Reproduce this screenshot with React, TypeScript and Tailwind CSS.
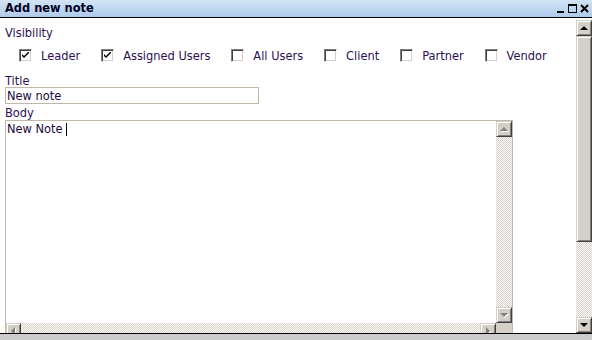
import React from "react";

const FONT = "font-['DejaVu_Sans_Condensed','DejaVu_Sans',sans-serif]";

function Arrow({ dir, disabled }: { dir: "up" | "down" | "left" | "right"; disabled?: boolean }) {
  const pts: Record<string, string> = {
    up: "4,1 0,5 8,5",
    down: "0,1 8,1 4,5",
    left: "5,0 5,8 1,4",
    right: "1,0 1,8 5,4",
  };
  const vertical = dir === "up" || dir === "down";
  const w = vertical ? 9 : 7;
  const h = vertical ? 7 : 9;
  return (
    <svg width={w} height={h} viewBox={`0 0 ${w} ${h}`}>
      {disabled && <polygon points={pts[dir]} fill="#ffffff" transform="translate(1,1)" />}
      <polygon points={pts[dir]} fill={disabled ? "#808080" : "#000000"} />
    </svg>
  );
}

function SButton({ dir, disabled, className = "" }: { dir: "up" | "down" | "left" | "right"; disabled?: boolean; className?: string }) {
  return (
    <div
      className={`flex items-center justify-center bg-[#d4d0c8] border border-t-[#d4d0c8] border-l-[#d4d0c8] border-r-[#404040] border-b-[#404040] shadow-[inset_1px_1px_#ffffff,inset_-1px_-1px_#808080] ${className}`}
    >
      <Arrow dir={dir} disabled={disabled} />
    </div>
  );
}

function Checkbox({ checked }: { checked?: boolean }) {
  return (
    <div className="w-[13px] h-[13px] shrink-0 bg-white border border-t-[#808080] border-l-[#808080] border-r-white border-b-white shadow-[inset_1px_1px_#404040,inset_-1px_-1px_#d4d0c8] flex items-center justify-center">
      {checked && (
        <svg width="7" height="7" viewBox="0 0 7 7">
          <path d="M0 2 L0 4 L2 6 L7 1 L7 -1 L2 4 Z" fill="#000" />
        </svg>
      )}
    </div>
  );
}

const checker =
  "bg-[image:repeating-conic-gradient(#d4d0c8_0_25%,#ffffff_0_50%)] bg-[length:2px_2px]";

export default function App() {
  const options = [
    { label: "Leader", checked: true },
    { label: "Assigned Users", checked: true },
    { label: "All Users" },
    { label: "Client" },
    { label: "Partner" },
    { label: "Vendor" },
  ];

  return (
    <div className={`w-[592px] h-[340px] flex flex-col overflow-hidden bg-white text-[12.7px] ${FONT}`}>
      {/* title bar */}
      <div className="h-[18px] shrink-0 flex items-center justify-between border-b border-black bg-gradient-to-b from-[#d2e4f5] to-[#aecbea] pl-[5px] pr-[2px]">
        <span className="font-bold text-[#000022] leading-none">Add new note</span>
        <div className="flex items-center gap-[1px]">
          <svg width="11" height="11" viewBox="0 0 11 11">
            <rect x="2" y="8" width="7" height="2" fill="#000" />
          </svg>
          <svg width="11" height="11" viewBox="0 0 11 11">
            <rect x="1.5" y="1.5" width="8" height="8" fill="none" stroke="#000" strokeWidth="1" />
            <rect x="1" y="1" width="9" height="2" fill="#000" />
          </svg>
          <svg width="11" height="11" viewBox="0 0 11 11">
            <path d="M2 2 L9 9 M9 2 L2 9" stroke="#000" strokeWidth="2" />
          </svg>
        </div>
      </div>

      {/* body */}
      <div className="flex-1 flex min-h-0">
        <div className="flex-1 min-w-0 overflow-hidden pl-[5px] pt-[8px] text-[#2c1055]">
          <div className="h-[14px] leading-[14px]">Visibility</div>
          <div className="h-[31px] flex items-center pl-[14px] gap-[21px]">
            {options.map((o) => (
              <div key={o.label} className="flex items-center gap-[9px]">
                <Checkbox checked={o.checked} />
                <span className="leading-[14px] whitespace-nowrap">{o.label}</span>
              </div>
            ))}
          </div>
          <div className="mt-[4px] h-[12px] leading-[12px]">Title</div>
          <div className="w-[254px] h-[17px] border border-[#c2b8a8] px-[1px] leading-[15px] text-[#1a0a40]">
            New note
          </div>
          <div className="h-[16px] leading-[17px]">Body</div>
          <div className="w-[508px] h-[220px] border border-[#c2b8a8] flex flex-col">
            <div className="flex-1 flex min-h-0">
              <div className="flex-1 px-[1px] pt-[1px] leading-[14px] text-[#1a0a40]">
                New Note <span className="inline-block w-px h-[13px] bg-black align-middle" />
              </div>
              <div className="w-4 flex flex-col">
                <SButton dir="up" disabled className="h-4" />
                <div className={`flex-1 ${checker}`} />
                <SButton dir="down" disabled className="h-4" />
              </div>
            </div>
            <div className="h-4 flex shrink-0">
              <SButton dir="left" disabled className="w-[15px]" />
              <div className={`flex-1 ${checker}`} />
              <SButton dir="right" disabled className="w-4" />
              <div className="w-4 bg-[#d4d0c8]" />
            </div>
          </div>
        </div>

        {/* outer scrollbar */}
        <div className="w-4 flex flex-col pt-[2px]">
          <SButton dir="up" className="h-4 shrink-0" />
          <div className="h-[206px] shrink-0 bg-[#d4d0c8] border border-t-[#d4d0c8] border-l-[#d4d0c8] border-r-[#404040] border-b-[#404040] shadow-[inset_1px_1px_#ffffff,inset_-1px_-1px_#808080]" />
          <div className={`flex-1 ${checker}`} />
          <SButton dir="down" className="h-4 shrink-0" />
        </div>
      </div>

      <div className="h-[7px] shrink-0 border-t border-black bg-[#cccccc]" />
    </div>
  );
}
